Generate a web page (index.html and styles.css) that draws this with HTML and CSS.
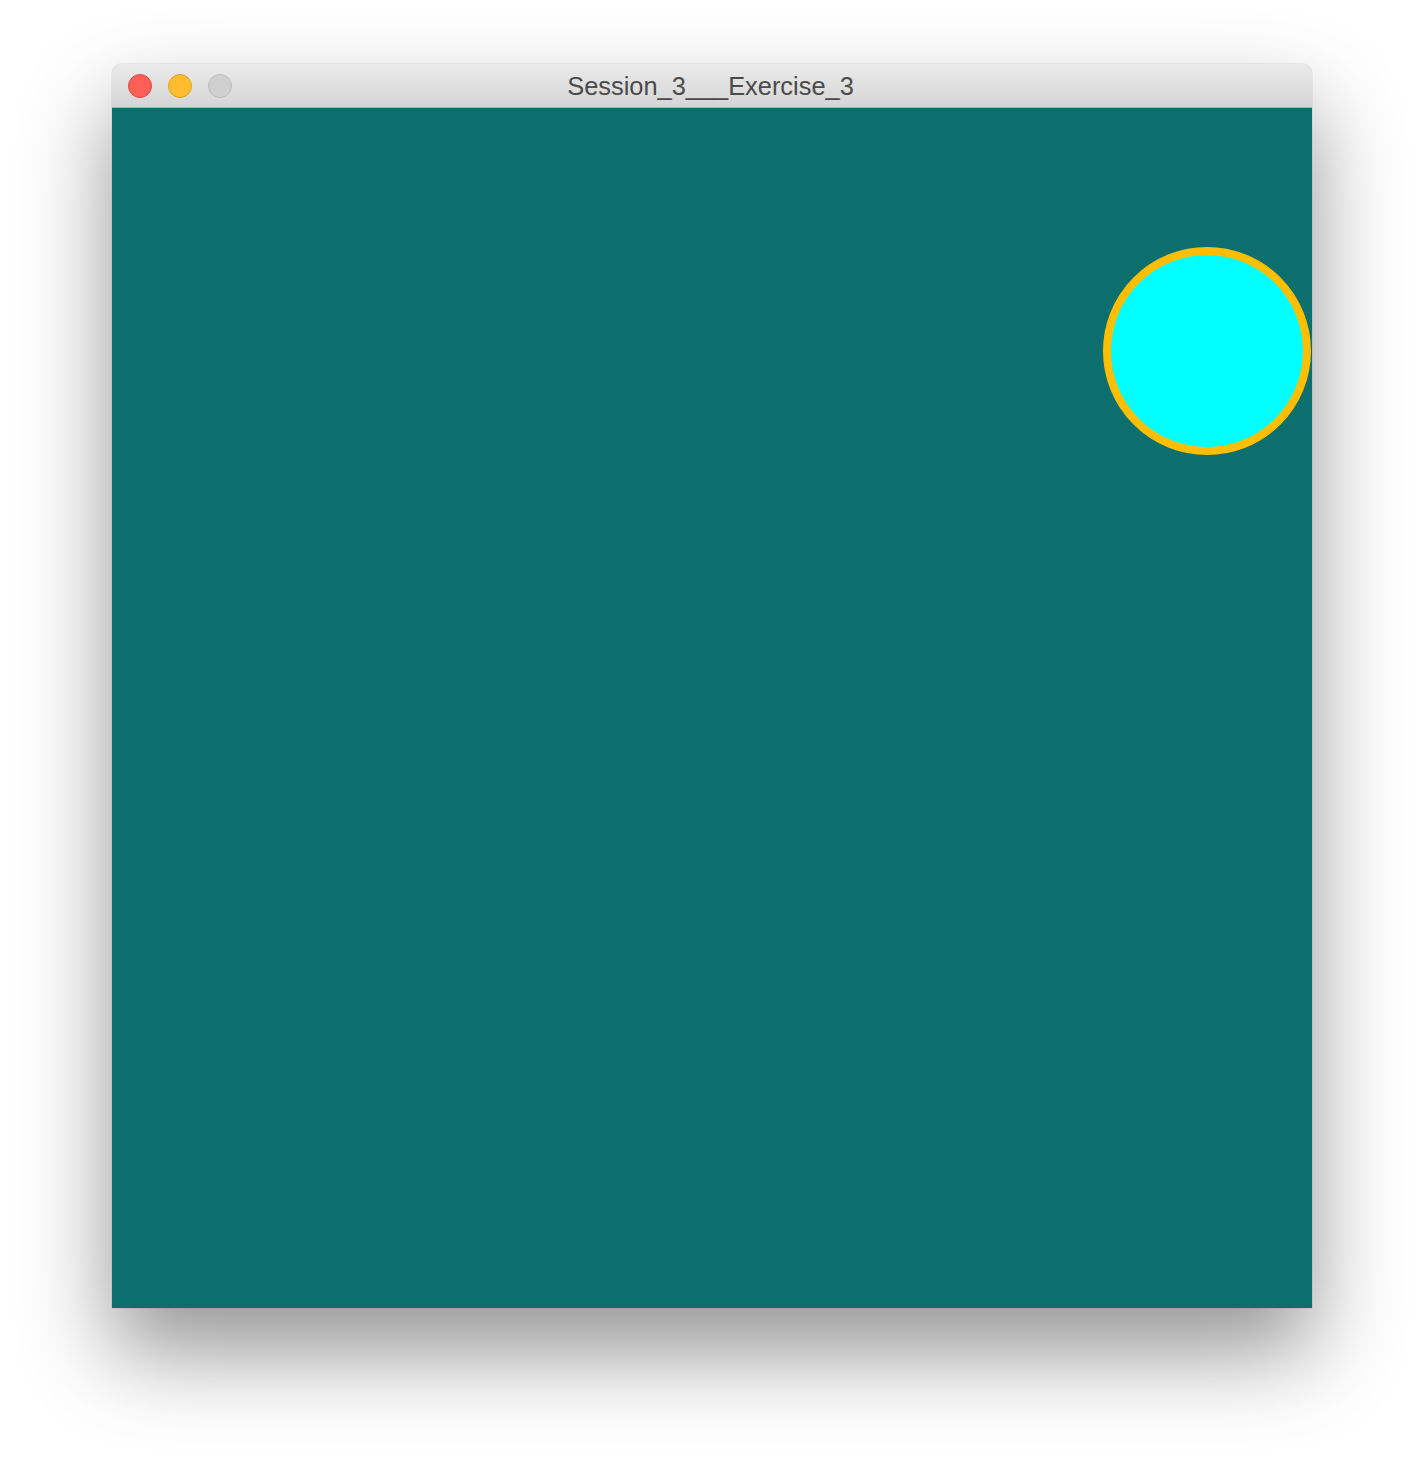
FILE: index.html
```html
<!DOCTYPE html>
<html>
<head>
<meta charset="utf-8">
<link rel="stylesheet" href="styles.css">
</head>
<body>
<div class="stage">
  <div class="window">
    <div class="titlebar">
      <div class="lights">
        <span class="light red"></span>
        <span class="light yellow"></span>
        <span class="light gray"></span>
      </div>
      <div class="title">Session_3___Exercise_3</div>
    </div>
    <div class="canvas">
      <div class="ball"></div>
    </div>
  </div>
</div>
</body>
</html>
```
FILE: styles.css
```css
html, body {
  margin: 0;
  padding: 0;
  background: #ffffff;
}
.stage {
  padding: 64px 0 0 112px;
  width: 1424px;
  height: 1468px;
  box-sizing: border-box;
  overflow: hidden;
}
.window {
  width: 1200px;
  border-radius: 10px 10px 0 0;
  box-shadow: 0 44px 90px rgba(0,0,0,0.42), 0 0 1px rgba(0,0,0,0.5);
  overflow: hidden;
}
.titlebar {
  position: relative;
  height: 43px;
  background: linear-gradient(#ebebeb, #d5d5d5);
  border-bottom: 1px solid #adadad;
  display: flex;
  align-items: center;
  justify-content: center;
}
.lights {
  position: absolute;
  left: 16px;
  top: 10px;
  display: flex;
  gap: 16px;
}
.light {
  width: 22px;
  height: 22px;
  border-radius: 50%;
  border: 1px solid transparent;
  display: block;
}
.red { background: #fe5f57; border-color: #e2463f; }
.yellow { background: #febc2e; border-color: #e1a116; }
.gray { background: #d0d0d0; border-color: #bcbcbc; }
.title {
  font-family: "Liberation Sans", Arial, sans-serif;
  font-size: 25.4px;
  color: #4b4b4b;
  padding-top: 2px;
  margin-left: -3px;
}
.canvas {
  position: relative;
  height: 1200px;
  background: #0c6e6d;
}
.ball {
  position: absolute;
  left: 991px;
  top: 139px;
  width: 192px;
  height: 192px;
  border-radius: 50%;
  background: #00ffff;
  border: 8px solid #ffbf00;
  box-sizing: content-box;
}
```
